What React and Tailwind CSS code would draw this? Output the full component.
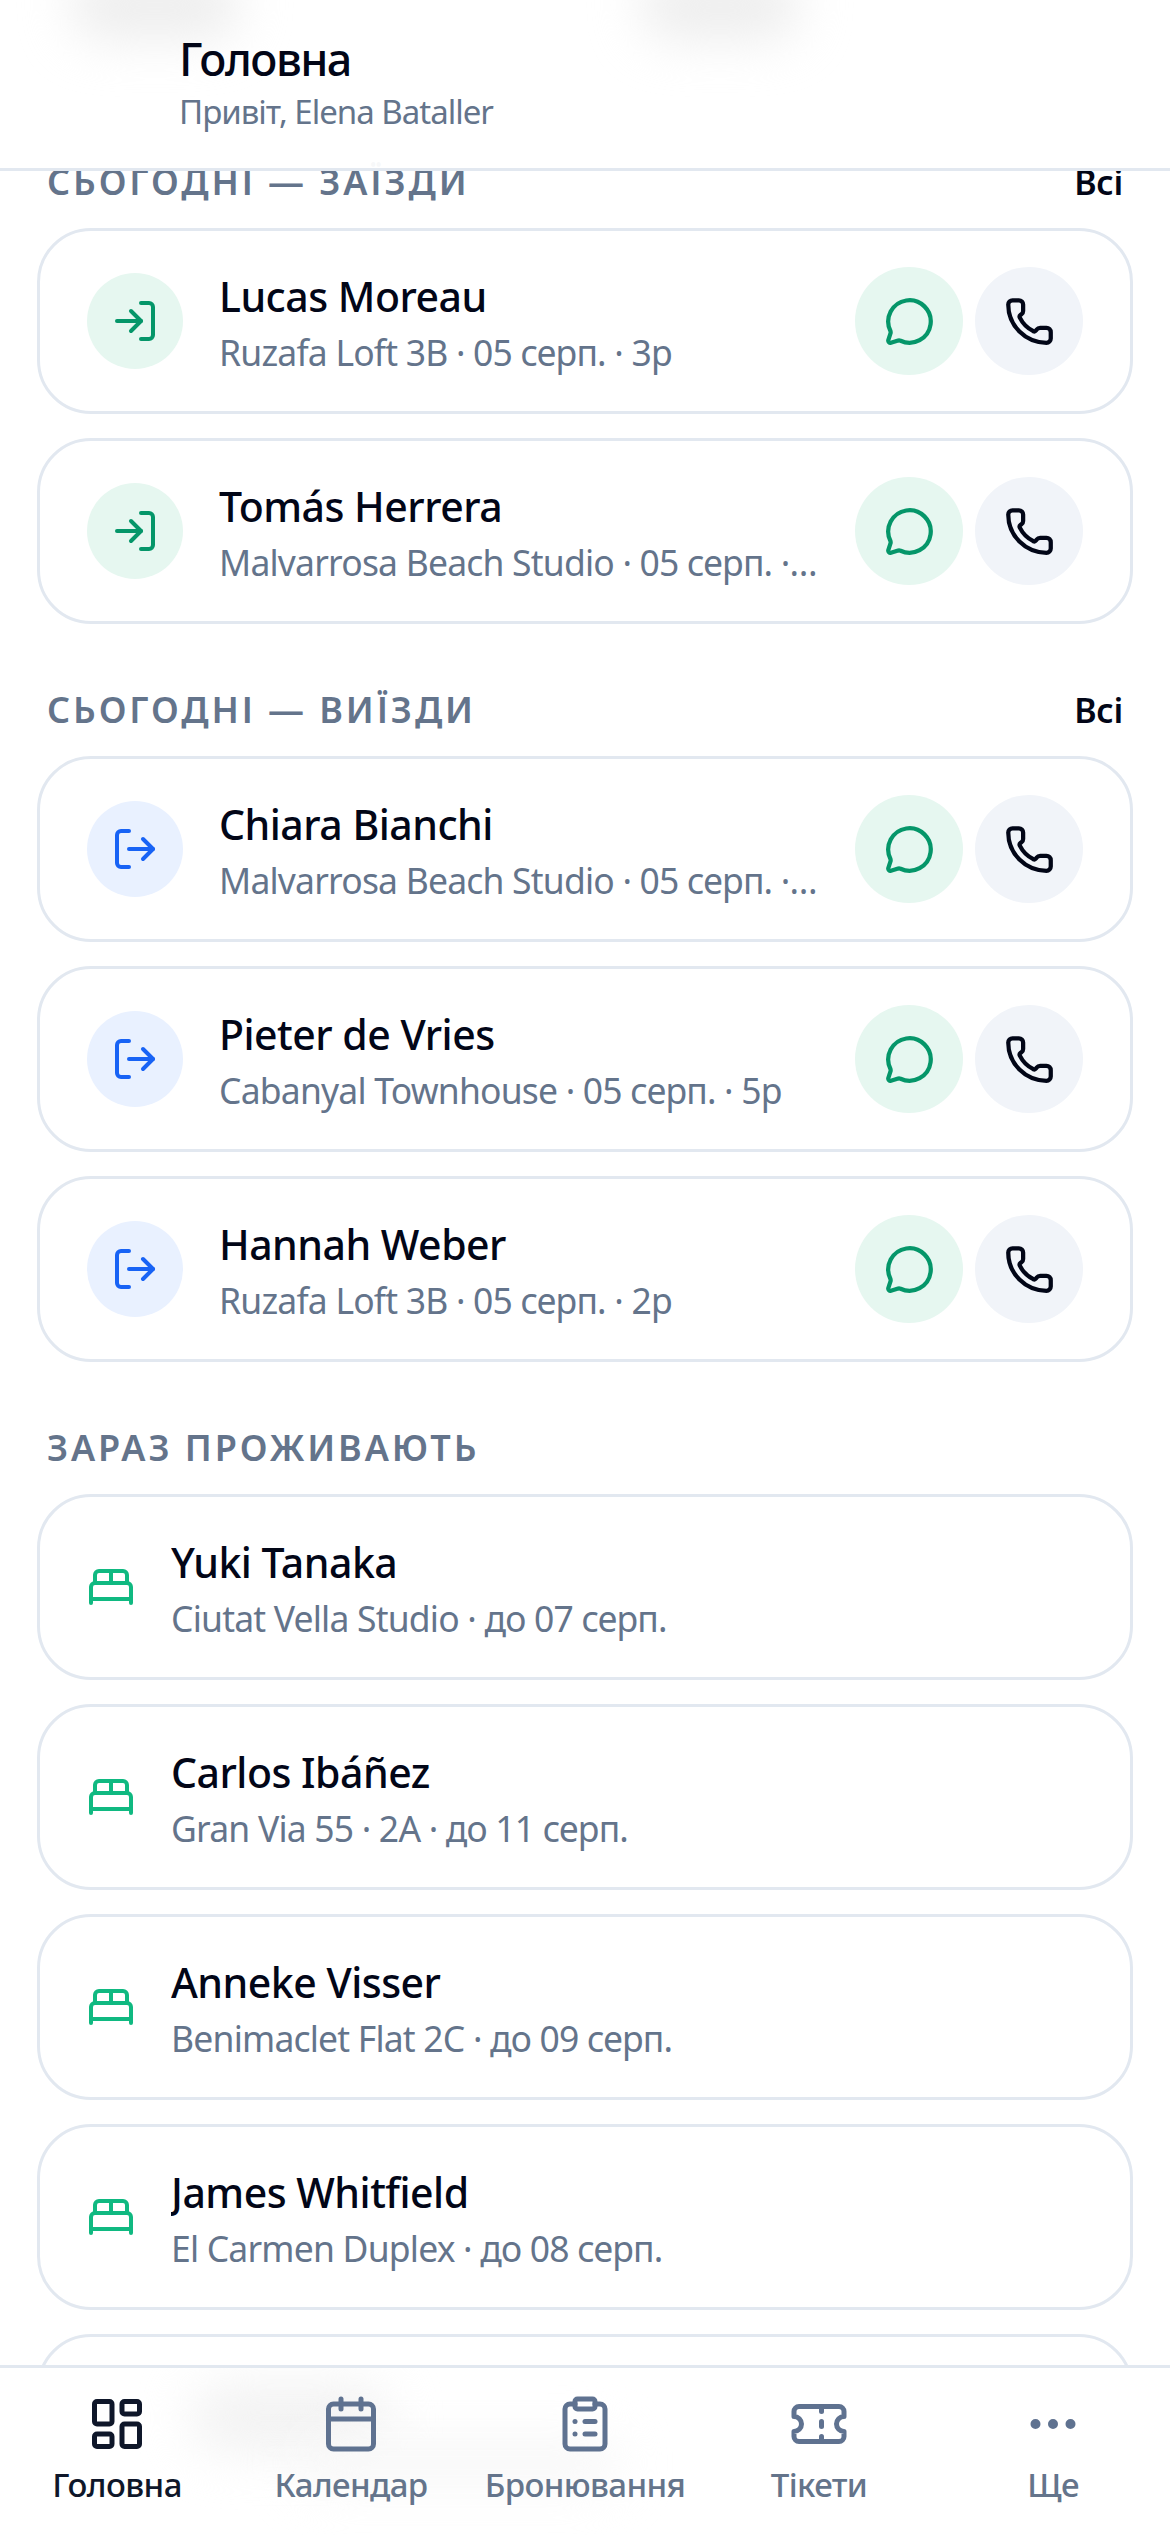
import React from 'react';
import { LogIn, LogOut, MessageCircle, Phone, BedDouble, LayoutDashboard, Calendar, ClipboardList, Ticket, Ellipsis } from 'lucide-react';

const font = { fontFamily: '"Noto Sans", sans-serif' };

function SectionHead({ title, all }) {
  return (
    <div className="flex items-center justify-between h-[50px] mb-[21px] pl-[10px] pr-[10px]">
      <span className="text-[36px] leading-[50px] font-semibold tracking-[2.9px] text-[#64748b] uppercase">{title}</span>
      {all && <span className="text-[34px] leading-[50px] font-semibold tracking-[-0.3px] text-[#020617]">Всі</span>}
    </div>
  );
}

function RowText({ name, sub }) {
  return (
    <div className="ml-[36px] flex-1 min-w-0 pt-[4px]">
      <div className="text-[41px] leading-[56px] font-medium tracking-[-0.5px] text-[#020617] truncate">{name}</div>
      <div className="mt-[1px] text-[35.5px] leading-[54px] tracking-[-0.8px] text-[#64748b] truncate">{sub}</div>
    </div>
  );
}

function GuestRow({ kind, name, sub }) {
  const isIn = kind === 'in';
  return (
    <div className="h-[186px] rounded-[54px] border-[3px] border-[#e2e8f0] bg-white flex items-center px-[47px]">
      <div className={`w-[96px] h-[96px] rounded-full shrink-0 flex items-center justify-center ${isIn ? 'bg-[#e6f7f0]' : 'bg-[#e9f1ff]'}`}>
        {isIn ? <LogIn size={48} strokeWidth={2} color="#059669" /> : <LogOut size={48} strokeWidth={2} color="#1863f5" />}
      </div>
      <RowText name={name} sub={sub} />
      <div className="ml-[36px] flex gap-[12px] shrink-0">
        <div className="w-[108px] h-[108px] rounded-full bg-[#e6f7f0] flex items-center justify-center">
          <MessageCircle size={51} strokeWidth={2} color="#059669" />
        </div>
        <div className="w-[108px] h-[108px] rounded-full bg-[#f1f4f9] flex items-center justify-center">
          <Phone size={51} strokeWidth={2} color="#020617" />
        </div>
      </div>
    </div>
  );
}

function StayRow({ name, sub }) {
  return (
    <div className="h-[186px] rounded-[54px] border-[3px] border-[#e2e8f0] bg-white flex items-center px-[47px]">
      <BedDouble size={48} strokeWidth={2} color="#10b981" className="shrink-0" />
      <RowText name={name} sub={sub} />
    </div>
  );
}

function NavItem({ icon: Icon, label, active }) {
  return (
    <div className="relative flex flex-col items-center">
      <Icon size={60} strokeWidth={2} color={active ? '#0f172a' : '#5f7290'} />
      <span className={`mt-[9px] text-[33px] leading-[44px] font-medium tracking-[-0.6px] ${active ? 'text-[#0f172a]' : 'text-[#64748b]'}`}>{label}</span>
    </div>
  );
}

export default function App() {
  return (
    <div style={font} className="relative w-[1170px] h-[2535px] overflow-hidden bg-white flex flex-col">
      <header className="relative z-10 h-[171px] shrink-0 bg-white/95 border-b-[3px] border-[#e2e8f0] pl-[179px] pt-[30px] overflow-hidden">
        <div className="absolute left-[70px] top-[-30px] w-[170px] h-[70px] rounded-full bg-[#eeeeee] blur-[24px]" />
        <div className="absolute left-[640px] top-[-30px] w-[160px] h-[70px] rounded-full bg-[#eeeeee] blur-[24px]" />
        <div className="relative text-[45px] leading-[58px] font-medium tracking-[-1.5px] text-[#020617]">Головна</div>
        <div className="relative mt-[2px] text-[33px] leading-[44px] tracking-[-1px] text-[#64748b]">Привіт, Elena Bataller</div>
      </header>
      <main className="flex-1 min-h-0 px-[37px]">
        <div className="-mt-[14px]">
          <SectionHead title="Сьогодні — заїзди" all />
          <div className="flex flex-col gap-[24px]">
            <GuestRow kind="in" name="Lucas Moreau" sub="Ruzafa Loft 3B · 05 серп. · 3р" />
            <GuestRow kind="in" name="Tomás Herrera" sub="Malvarrosa Beach Studio · 05 серп. · 2р" />
          </div>
          <div className="h-[61px]" />
          <SectionHead title="Сьогодні — виїзди" all />
          <div className="flex flex-col gap-[24px]">
            <GuestRow kind="out" name="Chiara Bianchi" sub="Malvarrosa Beach Studio · 05 серп. · 4р" />
            <GuestRow kind="out" name="Pieter de Vries" sub="Cabanyal Townhouse · 05 серп. · 5р" />
            <GuestRow kind="out" name="Hannah Weber" sub="Ruzafa Loft 3B · 05 серп. · 2р" />
          </div>
          <div className="h-[61px]" />
          <SectionHead title="Зараз проживають" />
          <div className="flex flex-col gap-[24px]">
            <StayRow name="Yuki Tanaka" sub="Ciutat Vella Studio · до 07 серп." />
            <StayRow name="Carlos Ibáñez" sub="Gran Via 55 · 2A · до 11 серп." />
            <StayRow name="Anneke Visser" sub="Benimaclet Flat 2C · до 09 серп." />
            <StayRow name="James Whitfield" sub="El Carmen Duplex · до 08 серп." />
            <StayRow name="" sub="" />
          </div>
        </div>
      </main>
      <nav className="relative z-10 h-[170px] shrink-0 bg-white border-t-[3px] border-[#e2e8f0] grid grid-cols-5 pt-[26px] overflow-hidden">
        <div className="absolute left-[190px] top-[15px] w-[200px] h-[70px] rounded-full bg-[#f3f3f3] blur-[24px]" />
        <div className="absolute left-[300px] top-[70px] w-[320px] h-[50px] rounded-full bg-[#f8f8f8] blur-[24px]" />
        <NavItem icon={LayoutDashboard} label="Головна" active />
        <NavItem icon={Calendar} label="Календар" />
        <NavItem icon={ClipboardList} label="Бронювання" />
        <NavItem icon={Ticket} label="Тікети" />
        <NavItem icon={Ellipsis} label="Ще" />
      </nav>
    </div>
  );
}
